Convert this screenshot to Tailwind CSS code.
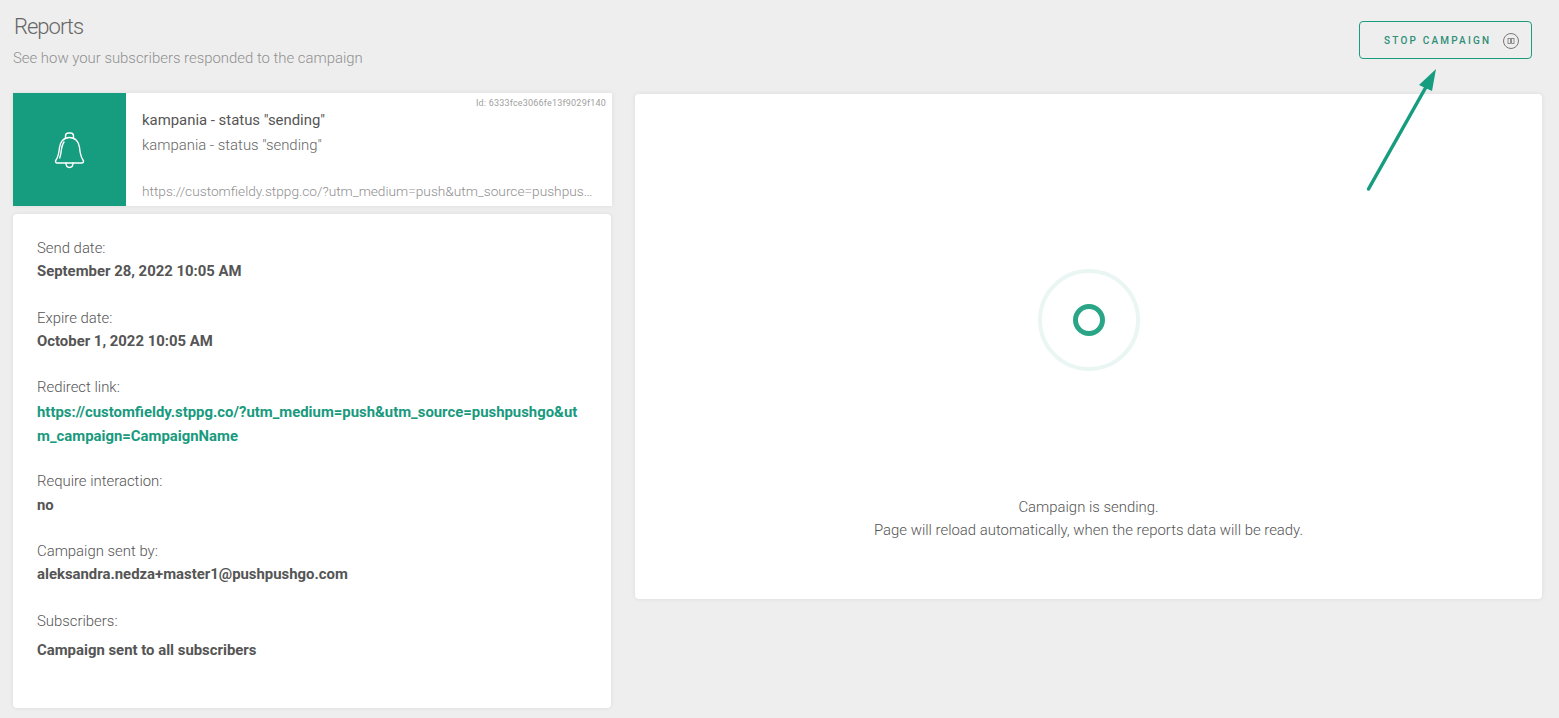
<!DOCTYPE html>
<html lang="en">
<head>
    <meta charset="UTF-8">
    <meta name="viewport" content="width=device-width, initial-scale=1.0">
    <title>Reports</title>
    <script src="https://cdn.jsdelivr.net/npm/@tailwindcss/browser@4"></script>
</head>
<body class="bg-[#eeeeee] font-['Roboto',sans-serif] font-light text-[#555555]">
    <div class="relative h-[718px] overflow-hidden pl-[13px] pr-[17px]">
        <!-- Header -->
        <header class="flex h-[93px] items-start justify-between">
            <div class="pt-[14px]">
                <h1 class="ml-[1px] text-[22px] leading-[26px] tracking-[-1px] text-[#666666]">Reports</h1>
                <p class="mt-[8px] text-[14.9px] leading-[20px] text-[#909090]">See how your subscribers responded to the campaign</p>
            </div>
            <button class="mt-[21px] mr-[10px] flex h-[38px] w-[173px] items-center rounded border border-[#1a9e7f] pl-[24px] pt-[1px] text-[10px] font-medium tracking-[2.2px] text-[#2f8f78]">
                STOP CAMPAIGN
                <svg class="ml-[11px]" width="18" height="18" viewBox="0 0 18 18" fill="none" stroke="#777777">
                    <circle cx="9" cy="9" r="7.500" />
                    <rect x="6" y="6.500" width="2.400" height="5" stroke-width="0.8" />
                    <rect x="9.600" y="6.500" width="2.400" height="5" stroke-width="0.8" />
                </svg>
            </button>
        </header>

        <div class="flex items-start gap-[23px]">
            <!-- Left column -->
            <div class="w-[599px] shrink-0">
                <div class="relative flex h-[113px] bg-white shadow-[0_0_5px_rgba(0,0,0,0.08)]">
                    <div class="flex w-[113px] shrink-0 items-center justify-center bg-[#169c7f]">
                        <svg width="32" height="38" viewBox="0 0 32 38" fill="none" stroke="#ffffff" stroke-width="1.400" stroke-linejoin="round" stroke-linecap="round">
                            <path d="M11.500 7.500V5c0-2 1-3 3-3h2c2 0 3 1 3 3v2.500" />
                            <path d="M15.500 6.500c-6 0-9.500 4.500-10 10-.5 5-1 9-3.500 12.500-1 1.500-.5 3 1 3h25c1.500 0 2-1.500 1-3-2.500-3.500-3-7.500-3.500-12.500-.5-5.500-4-10-10-10z" />
                            <path d="M10 11c-1.500 2-2.200 4-2.500 7-.3 3-.8 6-1.800 9" />
                            <path d="M12 32c0 3 1.500 4.500 3.500 4.500s3.500-1.500 3.500-4.500" />
                        </svg>
                    </div>
                    <div class="min-w-0 flex-1 pl-[16px] pr-[14px] pt-[16px]">
                        <p class="text-[14.9px] leading-[22px] font-normal text-[#555555]">kampania - status "sending"</p>
                        <p class="mt-[3px] text-[14.9px] leading-[22px] text-[#666666]">kampania - status "sending"</p>
                        <p class="mt-[24px] truncate text-[13.7px] leading-[22px] text-[#8f8f8f]">https://customfieldy.stppg.co/?utm_medium=push&amp;utm_source=pushpushgo&amp;utm_campaign=CampaignName</p>
                    </div>
                    <span class="absolute right-[6px] top-[3px] text-[9px] leading-[14px] tracking-[0.2px] font-normal text-[#a0a0a0]">Id: 6333fce3066fe13f9029f140</span>
                </div>

                <div class="mt-[8px] h-[494px] w-[598px] rounded bg-white px-[24px] pt-[23px] shadow-[0_0_5px_rgba(0,0,0,0.08)]">
                    <p class="text-[14.9px] leading-[22px]">Send date:</p>
                    <p class="text-[14.9px] leading-[24px] font-bold">September 28, 2022 10:05 AM</p>
                    <p class="mt-[24px] text-[14.9px] leading-[22px]">Expire date:</p>
                    <p class="text-[14.9px] leading-[24px] font-bold">October 1, 2022 10:05 AM</p>
                    <p class="mt-[23px] text-[14.9px] leading-[22px]">Redirect link:</p>
                    <p class="mt-[2px] break-all text-[14.9px] leading-[24px] font-bold text-[#199a7e]">https://customfieldy.stppg.co/?utm_medium=push&amp;utm_source=pushpushgo&amp;utm_campaign=CampaignName</p>
                    <p class="mt-[22px] text-[14.9px] leading-[22px]">Require interaction:</p>
                    <p class="mt-[1px] text-[14.9px] leading-[24px] font-bold">no</p>
                    <p class="mt-[23px] text-[14.9px] leading-[22px]">Campaign sent by:</p>
                    <p class="text-[14.9px] leading-[24px] font-bold">aleksandra.nedza+master1@pushpushgo.com</p>
                    <p class="mt-[24px] text-[14.9px] leading-[22px]">Subscribers:</p>
                    <p class="mt-[6px] text-[14.9px] leading-[24px] font-bold">Campaign sent to all subscribers</p>
                </div>
            </div>

            <!-- Right panel -->
            <div class="mt-[1px] flex h-[505px] flex-1 flex-col items-center rounded bg-white shadow-[0_0_5px_rgba(0,0,0,0.08)]">
                <div class="mt-[175px] flex h-[102px] w-[102px] items-center justify-center rounded-full border-4 border-[#eaf6f3]">
                    <div class="h-[32px] w-[32px] rounded-full border-[5px] border-[#2aa687]"></div>
                </div>
                <p class="mt-[125px] text-center text-[14.9px] leading-[23px]">Campaign is sending.<br>Page will reload automatically, when the reports data will be ready.</p>
            </div>
        </div>

        <!-- Annotation arrow -->
        <svg class="absolute left-[1360px] top-[65px]" width="80" height="130" viewBox="0 0 80 130" fill="none">
            <path d="M8.500 124L66 22" stroke="#169c7f" stroke-width="3.500" stroke-linecap="round" />
            <path d="M76 4L72 26L59 20z" fill="#169c7f" />
        </svg>
    </div>
</body>
</html>
